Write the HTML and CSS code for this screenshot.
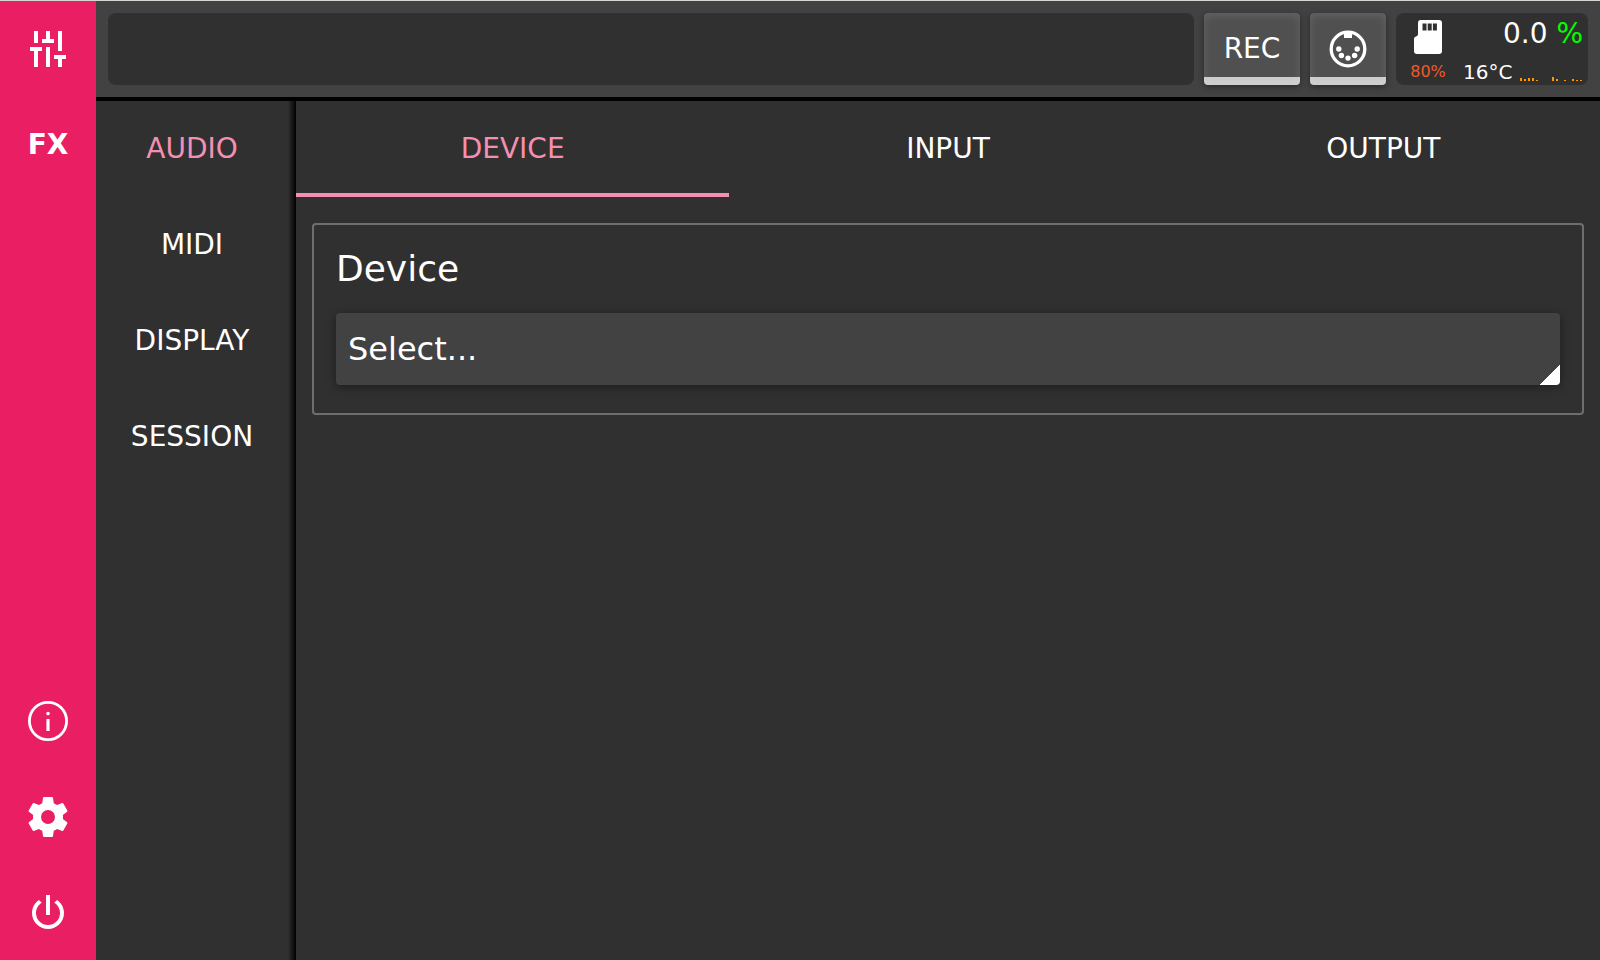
FILE: index.html
```html
<!DOCTYPE html>
<html lang="en">
<head>
    <meta charset="UTF-8">
    <meta name="viewport" content="width=device-width, initial-scale=1.0">
    <title>Audio settings</title>
    <link rel="stylesheet" href="styles.css">
</head>
<body>
    <div class="app">
        <nav class="sidebar">
            <button class="side-btn" type="button" aria-label="Mixer">
                <svg class="icon" viewBox="0 0 24 24"><path d="M5 3h2v6H5zM3 11h6v2H7v8H5v-8H3zM11 3h2v4h2v2H9V7h2zM11 11h2v10h-2zM17 3h2v10h-2zM15 15h6v2h-2v4h-2v-4h-2z"/></svg>
            </button>
            <button class="side-btn side-text" type="button">FX</button>
            <div class="spacer"></div>
            <button class="side-btn" type="button" aria-label="Info">
                <svg class="icon" viewBox="0 0 24 24"><circle class="line" cx="12" cy="12" r="9.3" stroke-width="1.4"/><circle cx="12" cy="8.3" r="0.9"/><path d="M11.2 11h1.6v6h-1.6z"/></svg>
            </button>
            <button class="side-btn" type="button" aria-label="Settings">
                <svg class="icon" viewBox="0 0 24 24"><path d="M12,15.5A3.5,3.5 0 0,1 8.5,12A3.5,3.5 0 0,1 12,8.5A3.5,3.5 0 0,1 15.5,12A3.5,3.5 0 0,1 12,15.5M19.43,12.97C19.47,12.65 19.5,12.33 19.5,12C19.5,11.67 19.47,11.34 19.43,11L21.54,9.37C21.73,9.22 21.78,8.95 21.66,8.73L19.66,5.27C19.54,5.05 19.27,4.96 19.05,5.05L16.56,6.05C16.04,5.66 15.5,5.32 14.87,5.07L14.5,2.42C14.46,2.18 14.25,2 14,2H10C9.75,2 9.54,2.18 9.5,2.42L9.13,5.07C8.5,5.32 7.96,5.66 7.44,6.05L4.95,5.05C4.73,4.96 4.46,5.05 4.34,5.27L2.34,8.73C2.21,8.95 2.27,9.22 2.46,9.37L4.57,11C4.53,11.34 4.5,11.67 4.5,12C4.5,12.33 4.53,12.65 4.57,12.97L2.46,14.63C2.27,14.78 2.21,15.05 2.34,15.27L4.34,18.73C4.46,18.95 4.73,19.03 4.95,18.95L7.44,17.94C7.96,18.34 8.5,18.68 9.13,18.93L9.5,21.58C9.54,21.82 9.75,22 10,22H14C14.25,22 14.46,21.82 14.5,21.58L14.87,18.93C15.5,18.67 16.04,18.34 16.56,17.94L19.05,18.95C19.27,19.03 19.54,18.95 19.66,18.73L21.66,15.27C21.78,15.05 21.73,14.78 21.54,14.63L19.43,12.97Z"/></svg>
            </button>
            <button class="side-btn" type="button" aria-label="Power">
                <svg class="icon" viewBox="0 0 24 24"><path d="M16.56,5.44L15.11,6.89C16.84,7.94 18,9.83 18,12A6,6 0 0,1 12,18A6,6 0 0,1 6,12C6,9.83 7.16,7.94 8.88,6.88L7.44,5.44C5.36,6.88 4,9.28 4,12A8,8 0 0,0 12,20A8,8 0 0,0 20,12C20,9.28 18.64,6.88 16.56,5.44M13,3H11V13H13"/></svg>
            </button>
        </nav>
        <div class="main">
            <header class="topbar">
                <div class="message"></div>
                <button class="key rec" type="button">REC</button>
                <button class="key midi" type="button" aria-label="MIDI">
                    <svg class="din" viewBox="0 0 38 38">
                        <circle class="line" cx="19" cy="19" r="16.8" stroke-width="3.3"/>
                        <path d="M15 3h8v5h-8z"/>
                        <circle cx="9.8" cy="19" r="2.7"/>
                        <circle cx="12.4" cy="25.5" r="2.7"/>
                        <circle cx="19" cy="28.1" r="2.7"/>
                        <circle cx="25.6" cy="25.5" r="2.7"/>
                        <circle cx="28.2" cy="19" r="2.7"/>
                    </svg>
                </button>
                <div class="status">
                    <div class="disk">
                        <svg class="sd" viewBox="0 0 28 34"><path fill-rule="evenodd" d="M6 0H25a3 3 0 0 1 3 3V31a3 3 0 0 1-3 3H3a3 3 0 0 1-3-3V19q0-1.500 1-2l2-1q1-.5 1-2V3a3 3 0 0 1 2-3zM8.500 3.500v7h4v-7zM13.700 3.500v7h4v-7zM18.900 3.500v7h4v-7z"/></svg>
                        <span class="disk-use">80%</span>
                    </div>
                    <div class="load">
                        <div class="cpu">0.0 <span class="unit">%</span></div>
                        <div class="temp">
                            <span>16°C</span>
                            <svg class="graph" viewBox="0 0 62 4"><path d="M0 1h2v3H0zM4 2h2v2H4zM8 1h2v3H8zM12 1h2v3h-2zM16 3h2v1h-2zM32 0h2v4h-2zM36 2h2v2h-2zM44 3h2v1h-2zM52 2h2v2h-2zM56 3h2v1h-2zM60 3h2v1h-2z"/></svg>
                        </div>
                    </div>
                </div>
            </header>
            <div class="content">
                <nav class="menu">
                    <button class="item active" type="button">AUDIO</button>
                    <button class="item" type="button">MIDI</button>
                    <button class="item" type="button">DISPLAY</button>
                    <button class="item" type="button">SESSION</button>
                </nav>
                <main class="page">
                    <div class="tabs" role="tablist">
                        <button class="item tab active" type="button" role="tab" aria-selected="true">DEVICE</button>
                        <button class="item tab" type="button" role="tab" aria-selected="false">INPUT</button>
                        <button class="item tab" type="button" role="tab" aria-selected="false">OUTPUT</button>
                    </div>
                    <section class="group">
                        <label class="group-title" for="device">Device</label>
                        <select class="select" id="device">
                            <option>Select...</option>
                        </select>
                    </section>
                </main>
            </div>
        </div>
    </div>
</body>
</html>
```
FILE: styles.css
```css
*{
    margin: 0;
    padding: 0;
    box-sizing: border-box;
}
body{
    height: 100vh;
    overflow: hidden;
    border-top: 1px solid #d5d6d0;
    background-color: #303030;
    color: #fff;
    font-family: "DejaVu Sans", sans-serif;
    font-size: 28px;
}
button,select{
    border: 0;
    background: none;
    color: inherit;
    font: inherit;
}
svg{
    display: block;
    fill: currentColor;
}
.line{
    fill: none;
    stroke: currentColor;
}
.app{
    display: flex;
    height: 100vh;
}

/* left bar */
.sidebar{
    display: flex;
    flex-direction: column;
    flex: none;
    width: 96px;
    background-color: #e91e63;
}
.side-btn{
    display: flex;
    align-items: center;
    justify-content: center;
    height: 96px;
    font-weight: bold;
}
.side-text,.rec,.item{
    padding-bottom: 2px;
}
.icon{
    width: 48px;
    height: 48px;
}
.spacer{
    flex: 1;
}
.main{
    display: flex;
    flex-direction: column;
    flex: 1;
    min-width: 0;
}

/* top bar */
.topbar{
    display: flex;
    gap: 10px;
    padding: 12px;
    border-bottom: 4px solid #000;
    background-color: #424242;
}
.message{
    flex: 1;
    border-radius: 8px;
    background-color: #303030;
}
.key{
    display: flex;
    align-items: center;
    justify-content: center;
    height: 72px;
    border-radius: 4px;
    background: linear-gradient(#0000 64px, #ccc 64px), #505050;
    box-shadow: inset 0 2px 10px rgba(255,255,255,.12), 0 2px 6px rgba(0,0,0,.4);
}
.rec{
    width: 96px;
}
.midi{
    width: 76px;
}
.din{
    width: 38px;
    height: 38px;
}
.status{
    display: flex;
    width: 192px;
    height: 72px;
    border-radius: 8px;
    background-color: #303030;
}
.disk{
    display: flex;
    flex-direction: column;
    align-items: center;
    gap: 8px;
    width: 64px;
    padding-top: 7px;
}
.sd{
    width: 28px;
    height: 34px;
}
.disk-use{
    color: #f05a28;
    font-size: 16px;
    line-height: 20px;
}
.load{
    flex: 1;
    padding: 5px 5px 0 3px;
}
.cpu{
    line-height: 32px;
    text-align: right;
}
.unit{
    color: #0f0;
}
.temp{
    display: flex;
    align-items: flex-end;
    justify-content: space-between;
    padding-top: 10px;
    padding-right: 1px;
    font-size: 20px;
    line-height: 24px;
}
.graph{
    width: 62px;
    height: 4px;
    margin-bottom: 3px;
    color: #ff9800;
}

/* settings */
.content{
    display: flex;
    flex: 1;
}
.menu{
    display: flex;
    flex-direction: column;
    width: 200px;
    padding-right: 8px;
    background: linear-gradient(to left, #000, #303030) right / 8px 100% no-repeat;
}
.item{
    height: 96px;
}
.active{
    color: #f48fb1;
}
.page{
    flex: 1;
}
.tabs{
    display: grid;
    grid-template-columns: repeat(3, 1fr);
    gap: 2px;
}
.tab.active{
    box-shadow: inset 0 -4px #f48fb1;
}
.group{
    margin: 26px 16px;
    padding: 22px 22px 28px;
    border: 2px solid #6e6e6e;
    border-radius: 4px;
}
.group-title{
    display: block;
    margin-bottom: 22px;
    font-size: 36px;
    line-height: 44px;
}
.select{
    display: block;
    width: 100%;
    height: 72px;
    padding: 0 12px;
    border-radius: 4px;
    background: linear-gradient(135deg, #0000 50%, #fff 50%) right bottom / 20px 20px no-repeat, #424242;
    box-shadow: 0 2px 10px rgba(0,0,0,.4);
    font-size: 32px;
    appearance: none;
}
```
